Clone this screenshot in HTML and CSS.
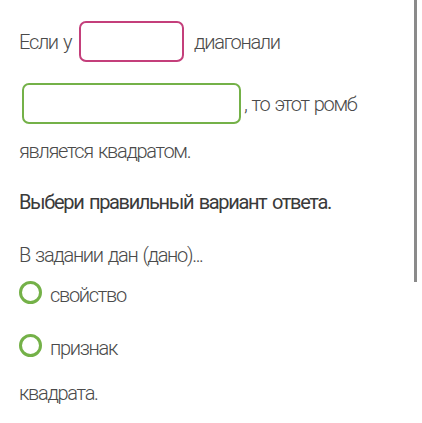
FILE: index.html
```html
<!DOCTYPE html>
<html lang="ru">
<head>
<meta charset="utf-8">
<link rel="stylesheet" href="styles.css">
</head>
<body>
<div class="page">
  <div class="content">
    <div class="row row1">
      <span class="txt">Если у</span>
      <span class="box box-pink"></span>
      <span class="txt">диагонали</span>
    </div>
    <div class="row row2">
      <span class="box box-green"></span>
      <span class="txt">, то этот ромб</span>
    </div>
    <p class="txt line3">является квадратом.</p>
    <p class="task">Выбери правильный вариант ответа.</p>
    <p class="txt given">В задании дан (дано)...</p>
    <div class="option opt1"><span class="radio"></span><span class="txt">свойство</span></div>
    <div class="option opt2"><span class="radio"></span><span class="txt">признак</span></div>
    <p class="txt last">квадрата.</p>
  </div>
  <div class="scrollbar"></div>
</div>
</body>
</html>
```
FILE: styles.css
```css
html, body {
  margin: 0;
  padding: 0;
  background: #fff;
}
.page {
  position: relative;
  width: 422px;
  height: 423px;
  overflow: hidden;
  font-family: Roboto, "Liberation Sans", sans-serif;
}
.content {
  padding: 0 0 0 19px;
}
.txt {
  font-size: 20px;
  font-weight: 300;
  color: #4a4a4a;
  letter-spacing: -1.3px;
  word-spacing: 1.5px;
}
p { margin: 0; }
.row {
  display: flex;
  align-items: center;
  height: 41px;
}
.row1 {
  margin-top: 21px;
}
.row1 .box-pink { margin: 0 10px 0 8px; }
.row2 {
  margin-top: 21px;
  padding-left: 3px;
}
.row2 .txt { margin-left: 3px; }
.box {
  display: inline-block;
  box-sizing: border-box;
  height: 41px;
  border-radius: 7px;
  border: 2px solid;
}
.box-pink {
  width: 105px;
  border-color: #c43f7b;
}
.box-green {
  width: 219px;
  border-color: #74b148;
}
.line3 {
  margin-top: 13px;
  line-height: 28px;
}
.task {
  margin-top: 23px;
  font-size: 20px;
  font-weight: 400;
  color: #3a3a3a;
  line-height: 28px;
  letter-spacing: -1.35px;
  word-spacing: 2px;
}
.given {
  margin-top: 25px;
  line-height: 28px;
}
.option {
  display: flex;
  align-items: center;
  gap: 8px;
  height: 28px;
}
.opt1 { margin-top: 12px; }
.opt2 { margin-top: 25px; }
.radio {
  box-sizing: border-box;
  width: 23px;
  height: 23px;
  border-radius: 50%;
  border: 3px solid #74b148;
  flex: none;
  margin-bottom: 5px;
}
.last {
  margin-top: 17px;
  line-height: 28px;
}
.scrollbar {
  position: absolute;
  left: 414px;
  top: 0;
  width: 3px;
  height: 282px;
  background: #8a8a8a;
}
```
